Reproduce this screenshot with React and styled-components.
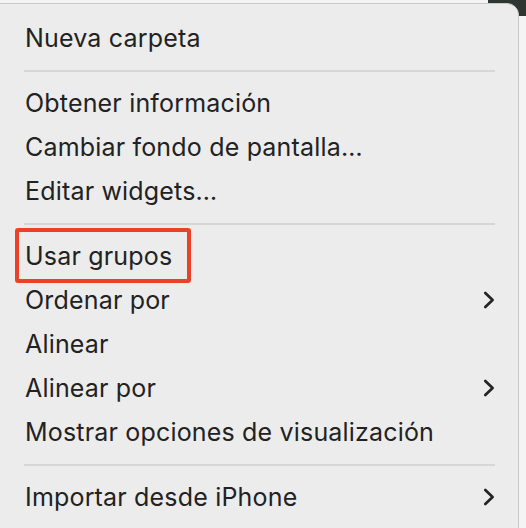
import React from "react";
import styled, { createGlobalStyle } from "styled-components";

const GlobalStyle = createGlobalStyle`
  html, body {
    margin: 0;
    padding: 0;
    background: #f4f4f4;
    overflow: hidden;
  }
  body {
    font-family: Inter, "Noto Sans", sans-serif;
    -webkit-font-smoothing: antialiased;
  }
`;

const items = [
  { label: "Nueva carpeta" },
  { sep: true },
  { label: "Obtener información" },
  { label: "Cambiar fondo de pantalla…" },
  { label: "Editar widgets…" },
  { sep: true },
  { label: "Usar grupos", highlight: true },
  { label: "Ordenar por", submenu: true },
  { label: "Alinear" },
  { label: "Alinear por", submenu: true },
  { label: "Mostrar opciones de visualización" },
  { sep: true },
  { label: "Importar desde iPhone", submenu: true },
];

const Chevron = () => (
  <svg width="12" height="18" viewBox="0 0 12 18" fill="none">
    <path
      d="M2.3 2 L9.6 9 L2.3 16"
      stroke="#242424"
      strokeWidth="2.7"
      strokeLinecap="round"
      strokeLinejoin="round"
    />
  </svg>
);

const App = () => {
  return (
    <Page>
      <GlobalStyle />
      <Corner />
      <Menu>
        {items.map((item, i) =>
          item.sep ? (
            <Separator key={i} />
          ) : (
            <Row key={i}>
              <Label $highlight={item.highlight}>{item.label}</Label>
              {item.submenu && (
                <Arrow>
                  <Chevron />
                </Arrow>
              )}
            </Row>
          )
        )}
      </Menu>
    </Page>
  );
};

export default App;

const Page = styled.div`
  position: relative;
  width: 526px;
  height: 528px;
  padding-top: 3px;
  box-sizing: border-box;
  overflow: hidden;
`;

const Corner = styled.div`
  position: absolute;
  top: 0;
  right: 0;
  width: 38px;
  height: 16px;
  background: #2f3530;
`;

const Menu = styled.div`
  position: relative;
  margin-left: -12px;
  width: 531px;
  background: #ececec;
  border: 1px solid #c9c9c9;
  border-radius: 12px;
  padding: 12px 0 20px 0;
  box-sizing: border-box;
`;

const Row = styled.div`
  height: 44px;
  display: flex;
  align-items: center;
  justify-content: space-between;
  padding: 0 23px 0 36px;
`;

const Label = styled.span`
  position: relative;
  font-size: 25px;
  line-height: 30px;
  letter-spacing: 0.18px;
  color: #222222;

  ${({ $highlight }) =>
    $highlight &&
    `
    &::before {
      content: "";
      position: absolute;
      left: -10px;
      top: -13px;
      right: -19px;
      bottom: -12px;
      border: 4px solid #ec4128;
      border-radius: 3px;
    }
  `}
`;

const Arrow = styled.span`
  display: flex;
  align-items: center;
`;

const Separator = styled.div`
  height: 21px;
  margin: 0 23px 0 35px;
  display: flex;
  align-items: center;

  &::after {
    content: "";
    flex: 1;
    height: 2px;
    background: #d6d6d6;
  }
`;
